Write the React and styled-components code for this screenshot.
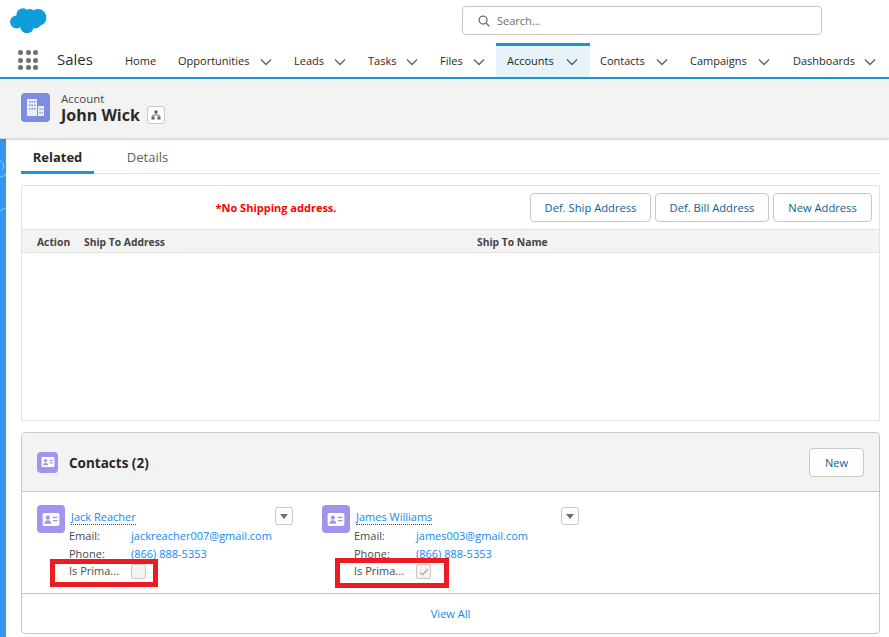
import React from "react";
import styled, { createGlobalStyle } from "styled-components";

const Global = createGlobalStyle`
  html, body { margin: 0; padding: 0; background: #fff; }
  body { font-family: "Open Sans", "Noto Sans", "Liberation Sans", sans-serif; font-size: 11px; color: #3e3e3c; }
  * { box-sizing: border-box; }
`;

const Page = styled.div`
  width: 889px; height: 637px; overflow: hidden; background: #fff; display: flex; flex-direction: column;
`;
const TopBar = styled.header`
  height: 43px; flex: none; display: flex; align-items: flex-start; padding: 6px 0 0 10px;
`;
const Logo = styled.svg`
  width: 37px; height: 27px; flex: none; margin-top: 2px; fill: #0d9dda;
`;
const SearchBox = styled.div`
  width: 360px; height: 29px; margin-left: 415px; border: 1px solid #c9c9c9; border-radius: 4px;
  display: flex; align-items: center; gap: 7px; padding-left: 15px; color: #706e6b; font-size: 11px;
`;
const NavBar = styled.nav`
  height: 36px; flex: none; display: flex; align-items: stretch; border-bottom: 2px solid #1b96d6; padding-left: 18px;
`;
const Waffle = styled.div`
  width: 20px; height: 20px; margin-top: 7px; display: grid; grid-template-columns: repeat(3, 5px); gap: 2.5px;
  & > i { width: 5px; height: 5px; border-radius: 50%; background: #706e6b; display: block; }
`;
const AppName = styled.div`
  font-size: 15px; width: 68px; margin-left: 19px; line-height: 33px; color: #2b2b2b;
`;
const NavItem = styled.div`
  width: ${p => p.$w}px; flex: none; display: flex; align-items: center; justify-content: space-between;
  padding: 0 ${p => p.$pr}px 3px ${p => p.$pl ?? 0}px; font-size: 11px; color: #2b2826;
  background: ${p => (p.$active ? "#e6f3f9" : "transparent")};
  border-top: 3px solid ${p => (p.$active ? "#1b96d6" : "transparent")};
  height: 34px;
`;
const Chevron = styled.svg`
  width: 12px; height: 8px; fill: none; stroke: #5f5f5d; stroke-width: 1.3; flex: none; margin-top: 3px;
`;
const RecordHeader = styled.section`
  height: 60px; flex: none; background: #f3f3f3; border-bottom: 1px solid #d8d8d8;
  box-shadow: 0 1px 2px rgba(0,0,0,.14); display: flex; align-items: center; padding: 0 0 2px 21px; gap: 11px; position: relative;
`;
const IconTile = styled.div`
  width: ${p => p.$s}px; height: ${p => p.$s}px; border-radius: 4px; background: ${p => p.$bg}; flex: none;
  display: flex; align-items: center; justify-content: center;
`;
const RecordTitle = styled.div`
  display: flex; flex-direction: column; line-height: 15px;
  & > small { font-size: 11.5px; color: #4a4a48; }
`;
const TitleRow = styled.div`
  display: flex; align-items: center; gap: 7px; font-size: 16px; font-weight: 700; color: #2b2826; line-height: 18px;
`;
const HierarchyBtn = styled.div`
  width: 18px; height: 18px; border: 1px solid #c9c9c9; background: #fff; border-radius: 3px; display: flex; align-items: center; justify-content: center;
`;
const Body = styled.div`
  flex: 1; display: flex; min-height: 0;
`;
const Strip = styled.div`
  width: 6px; flex: none; background: #3398ef; margin-right: 15px; overflow: hidden;
`;
const Main = styled.main`
  width: 859px; flex: none; display: flex; flex-direction: column;
`;
const Tabs = styled.div`
  height: 35px; flex: none; display: flex; border-bottom: 1px solid #e3e3e3; margin-bottom: 11px;
`;
const Tab = styled.div`
  width: ${p => p.$w}px; height: 35px; display: flex; align-items: center; justify-content: center; font-size: 13px;
  padding-top: ${p => (p.$active ? 3 : 1)}px;
  font-weight: ${p => (p.$active ? 700 : 400)}; color: ${p => (p.$active ? "#2b2826" : "#5f5f5d")};
  border-bottom: ${p => (p.$active ? "3px solid #1b96d6" : "none")};
  margin-right: ${p => p.$mr ?? 0}px;
`;
const AddressPanel = styled.section`
  height: 236px; flex: none; border: 1px solid #e3e3e3; margin-bottom: 11px; display: flex; flex-direction: column;
`;
const PanelToolbar = styled.div`
  height: 43px; flex: none; display: flex; align-items: center; padding: 0 7px 1px 0; gap: 4px;
`;
const Warning = styled.div`
  flex: 1; text-align: center; padding-left: 4px; color: #f00; font-weight: 700; font-size: 11px; white-space: nowrap;
`;
const OutlineBtn = styled.div`
  width: ${p => p.$w}px; height: 29px; flex: none; border: 1px solid #c9c9c9; border-radius: 4px; background: #fff;
  display: flex; align-items: center; justify-content: center; color: #0b5f93; font-size: 11.2px;
`;
const TableHead = styled.div`
  height: 24px; flex: none; background: #f3f3f3; border-top: 1px solid #e3e3e3; border-bottom: 1px solid #e3e3e3; padding-top: 1px;
  display: grid; grid-template-columns: 62px 393px 1fr; align-items: center; font-weight: 700; font-size: 10.3px; color: #444;
  & > span:first-child { padding-left: 15px; }
`;
const Card = styled.section`
  height: 202px; flex: none; border: 1px solid #c9c9c9; border-radius: 4px; display: flex; flex-direction: column; overflow: hidden;
`;
const CardHead = styled.div`
  height: 59px; flex: none; background: #f3f3f3; border-bottom: 1px solid #c9c9c9; display: flex; align-items: center;
  padding: 0 15px; gap: 11px;
`;
const CardTitle = styled.div`
  flex: 1; font-size: 13.5px; font-weight: 700; color: #2b2826; padding-top: 2px;
`;
const NewBtn = styled.div`
  width: 55px; height: 29px; border: 1px solid #c9c9c9; background: #fff; border-radius: 4px; display: flex; align-items: center; justify-content: center;
  color: #0b5f93; font-size: 11px;
`;
const CardBody = styled.div`
  height: 102px; flex: none; border-bottom: 1px solid #c9c9c9; display: flex; padding: 13px 0 0 15px;
`;
const Contact = styled.div`
  width: 285px; flex: none; display: flex; gap: 4px; position: relative;
`;
const ContactInfo = styled.div`
  width: 226px; display: flex; flex-direction: column;
`;
const NameLink = styled.a`
  align-self: flex-start; color: #1589ee; font-size: 11px; line-height: 15px; margin: 4px 0 2px 2px;
  border-bottom: 1px dotted #0b5f93;
`;
const Field = styled.div`
  display: grid; grid-template-columns: 62px 1fr; height: 17.5px; line-height: 17.5px; font-size: 11px; color: #4a4a48;
  & > a { color: #1589ee; font-size: 11px; white-space: nowrap; }
`;
const CheckCell = styled.div`
  width: 15px; height: 15px; margin-top: 2px; border: 1px solid #c9c9c9; border-radius: 2px; background: #f3f3f3;
  display: flex; align-items: center; justify-content: center;
`;
const Menu = styled.div`
  position: absolute; top: 2px; left: ${p => p.$l}px; width: 18px; height: 18px; border: 1px solid #c9c9c9; border-radius: 3px; background: #fff;
  display: flex; align-items: center; justify-content: center;
  &::after { content: ""; border-left: 4.5px solid transparent; border-right: 4.5px solid transparent; border-top: 5px solid #706e6b; }
`;
const Highlight = styled.div`
  position: absolute; left: 13px; top: ${p => p.$t}px; width: ${p => p.$w}px; height: ${p => p.$h}px; border: 5px solid #ed1c24; pointer-events: none;
`;
const ViewAll = styled.a`
  flex: 1; display: flex; align-items: center; justify-content: center; color: #1589ee; font-size: 11px; padding-bottom: 1px;
`;

const ChevronIcon = () => (
  <Chevron viewBox="0 0 12 8"><path d="M1 1.5 L6 6.5 L11 1.5" /></Chevron>
);
const ContactGlyph = ({ w, h }) => (
  <svg width={w} height={h} viewBox="0 0 18 14">
    <rect x="0" y="0" width="18" height="14" rx="1.5" fill="#fff" />
    <circle cx="5.6" cy="5" r="2.2" fill="#a094ed" />
    <path d="M2 11.5c0-2.4 1.6-3.6 3.6-3.6s3.6 1.2 3.6 3.6z" fill="#a094ed" />
    <rect x="11" y="4" width="5" height="1.5" fill="#a094ed" />
    <rect x="11" y="7.5" width="5" height="1.5" fill="#a094ed" />
  </svg>
);

const nav = [
  { label: "Home", w: 53, pr: 0, plain: true },
  { label: "Opportunities", w: 116, pr: 22 },
  { label: "Leads", w: 74, pr: 22 },
  { label: "Tasks", w: 72, pr: 22 },
  { label: "Files", w: 56, pr: 11 },
  { label: "Accounts", w: 94, active: true, pl: 11, pr: 12 },
  { label: "Contacts", w: 100, pl: 10, pr: 22 },
  { label: "Campaigns", w: 103, pr: 23 },
  { label: "Dashboards", w: 96, pr: 13 },
];

const ContactCard = ({ name, email, checked, menuLeft, box }) => (
  <Contact>
    <IconTile $s={28} $bg="#a094ed"><ContactGlyph w={18} h={13} /></IconTile>
    <ContactInfo>
      <NameLink>{name}</NameLink>
      <Field><span>Email:</span><a>{email}</a></Field>
      <Field><span>Phone:</span><a>(866) 888-5353</a></Field>
      <Field>
        <span>Is Prima...</span>
        <CheckCell>
          {checked && (
            <svg width="10" height="8" viewBox="0 0 10 8"><path d="M1 4.2 L3.6 6.6 L9 1.2" fill="none" stroke="#a8a8a8" strokeWidth="1.2" /></svg>
          )}
        </CheckCell>
      </Field>
    </ContactInfo>
    <Menu $l={menuLeft} />
    <Highlight $t={box.t} $w={box.w} $h={box.h} />
  </Contact>
);

export default function App() {
  return (
    <Page>
      <Global />
      <TopBar>
        <Logo viewBox="0 0 37 27">
          <circle cx="13" cy="7" r="6.7" />
          <circle cx="20" cy="6" r="5" />
          <circle cx="28" cy="9.5" r="8.4" />
          <circle cx="6.5" cy="14" r="6.4" />
          <circle cx="17" cy="18.5" r="6.8" />
          <circle cx="25" cy="14" r="6.5" />
          <rect x="8" y="6" width="20" height="12" />
        </Logo>
        <SearchBox>
          <svg width="12" height="12" viewBox="0 0 13 13" fill="none" stroke="#706e6b" strokeWidth="1.4">
            <circle cx="5.5" cy="5.5" r="4.3" /><path d="M8.6 8.6 L12.2 12.2" />
          </svg>
          Search...
        </SearchBox>
      </TopBar>
      <NavBar>
        <Waffle>{Array.from({ length: 9 }, (_, i) => <i key={i} />)}</Waffle>
        <AppName>Sales</AppName>
        {nav.map(n => (
          <NavItem key={n.label} $w={n.w} $active={n.active} $pl={n.pl} $pr={n.pr}>
            <span>{n.label}</span>
            {!n.plain && <ChevronIcon />}
          </NavItem>
        ))}
      </NavBar>
      <RecordHeader>
        <IconTile $s={29} $bg="#7f8de1">
          <svg width="19" height="19" viewBox="0 0 19 19" fill="#fff">
            <path d="M1 1h10v17H1z" opacity=".85" />
            <path d="M12 8h6v10h-6z" opacity=".85" />
            <g fill="#7f8de1">
              <rect x="3" y="3" width="1.5" height="1.5" /><rect x="5.5" y="3" width="1.5" height="1.5" /><rect x="8" y="3" width="1.5" height="1.5" />
              <rect x="3" y="6.5" width="1.5" height="1.5" /><rect x="5.5" y="6.5" width="1.5" height="1.5" /><rect x="8" y="6.5" width="1.5" height="1.5" />
              <rect x="3" y="10" width="1.5" height="1.5" /><rect x="5.5" y="10" width="1.5" height="1.5" /><rect x="8" y="10" width="1.5" height="1.5" />
              <rect x="13.5" y="10.5" width="1.2" height="1.5" /><rect x="15.6" y="10.5" width="1.2" height="1.5" />
              <rect x="13.5" y="14" width="1.2" height="1.5" /><rect x="15.6" y="14" width="1.2" height="1.5" />
            </g>
          </svg>
        </IconTile>
        <RecordTitle>
          <small>Account</small>
          <TitleRow>
            John Wick
            <HierarchyBtn>
              <svg width="10" height="10" viewBox="0 0 10 10" fill="#5f5f5d">
                <rect x="3.5" y="0.5" width="3" height="3" /><rect x="0.5" y="6.5" width="3" height="3" /><rect x="6.5" y="6.5" width="3" height="3" />
                <path d="M4.6 3.5h.8v1.2h3.1v1.8h-.8v-1H2.3v1h-.8V4.7h3.1z" />
              </svg>
            </HierarchyBtn>
          </TitleRow>
        </RecordTitle>
      </RecordHeader>
      <Body>
        <Strip>
          <svg width="6" height="90" viewBox="0 0 6 90" fill="none" stroke="#a9d2f7" strokeWidth=".8">
            <path d="M0 22c4 2 5 6 2 9M0 38c3 0 5-2 6-3M0 72c2-1 4-3 6-3" />
          </svg>
        </Strip>
        <Main>
          <Tabs>
            <Tab $w={73} $active $mr={15}>Related</Tab>
            <Tab $w={77}>Details</Tab>
          </Tabs>
          <AddressPanel>
            <PanelToolbar>
              <Warning>*No Shipping address.</Warning>
              <OutlineBtn $w={121}>Def. Ship Address</OutlineBtn>
              <OutlineBtn $w={114}>Def. Bill Address</OutlineBtn>
              <OutlineBtn $w={99}>New Address</OutlineBtn>
            </PanelToolbar>
            <TableHead>
              <span>Action</span>
              <span>Ship To Address</span>
              <span>Ship To Name</span>
            </TableHead>
          </AddressPanel>
          <Card>
            <CardHead>
              <IconTile $s={21} $bg="#a094ed"><ContactGlyph w={14} h={10} /></IconTile>
              <CardTitle>Contacts (2)</CardTitle>
              <NewBtn>New</NewBtn>
            </CardHead>
            <CardBody>
              <ContactCard name="Jack Reacher" email="jackreacher007@gmail.com" menuLeft={238} box={{ t: 54, w: 108, h: 28 }} />
              <ContactCard name="James Williams" email="james003@gmail.com" checked menuLeft={239} box={{ t: 53, w: 114, h: 30 }} />
            </CardBody>
            <ViewAll>View All</ViewAll>
          </Card>
        </Main>
      </Body>
    </Page>
  );
}
